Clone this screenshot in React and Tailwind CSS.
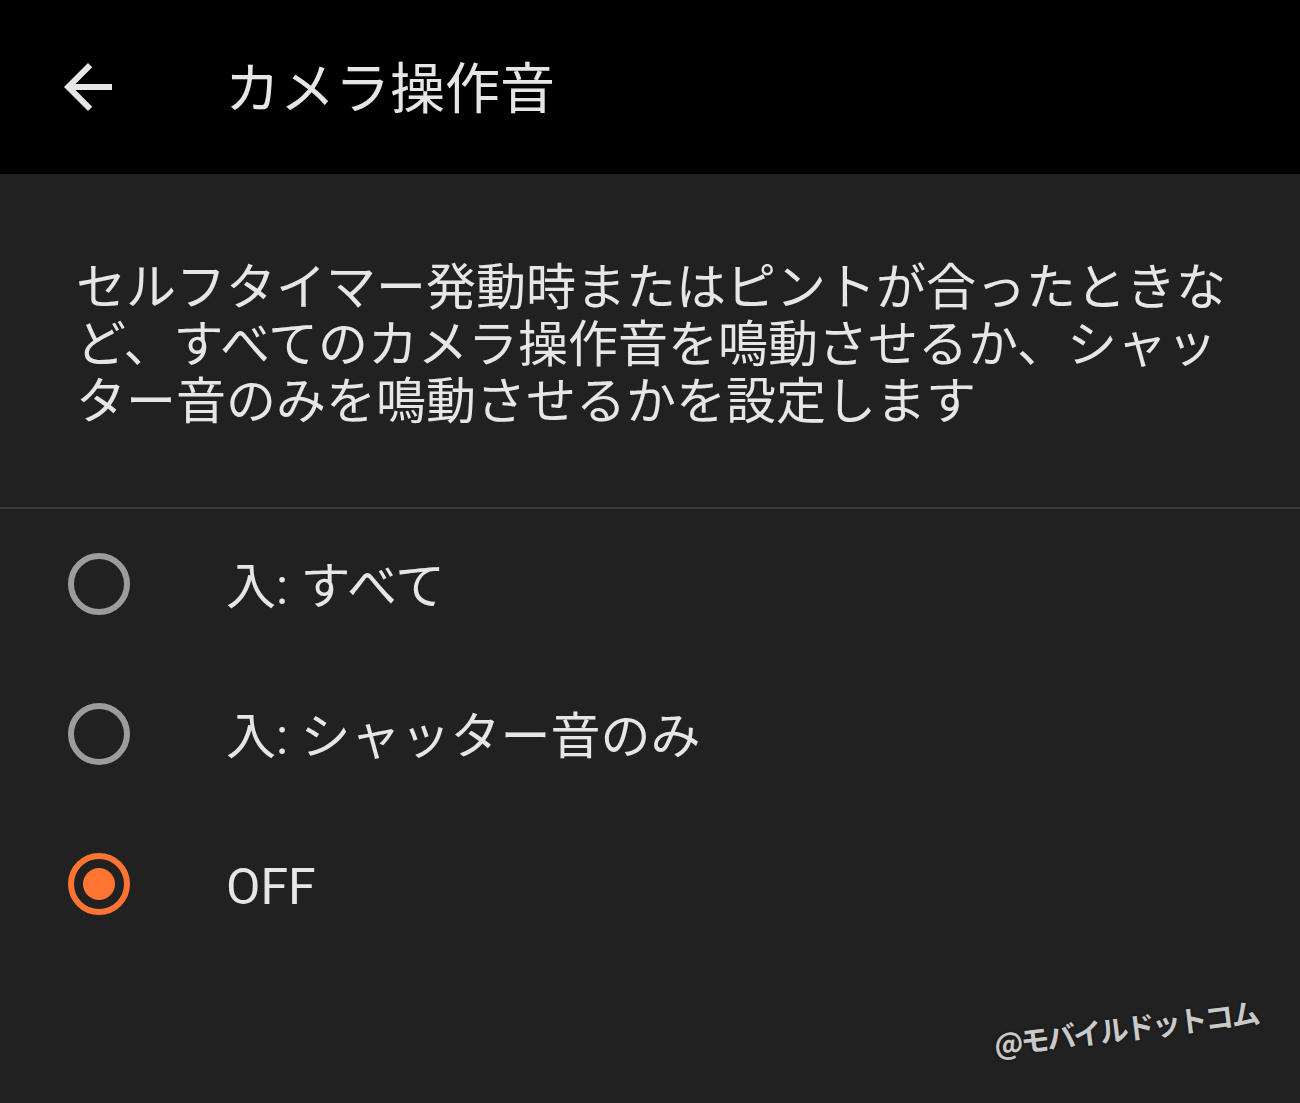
import { useState } from 'react'

const options = [
  { id: 'all', label: '入: すべて' },
  { id: 'shutter', label: '入: シャッター音のみ' },
  { id: 'off', label: 'OFF' },
]

const Radio = ({ checked }) => (
  <div
    className={`w-[62px] h-[62px] rounded-full border-[6px] flex items-center justify-center shrink-0 ${
      checked ? 'border-[#ff7433]' : 'border-[#9c9c9c]'
    }`}
  >
    {checked && <div className="w-[32px] h-[32px] rounded-full bg-[#ff7433]" />}
  </div>
)

const App = () => {
  const [selected, setSelected] = useState('off')

  return (
    <div className="relative w-[1300px] h-[1103px] overflow-hidden bg-[#212121] text-[#e6e6e6] font-['Roboto','Noto_Sans_CJK_JP',sans-serif]">
      <div className="h-[174px] bg-black flex items-center">
        <button className="ml-[52px] w-[72px] h-[72px] flex items-center justify-center">
          <svg viewBox="0 0 24 24" className="w-[72px] h-[72px]" fill="#e6e6e6">
            <path d="M20 11H7.83l5.59-5.59L12 4l-8 8 8 8 1.41-1.41L7.83 13H20v-2z" />
          </svg>
        </button>
        <h1 className="ml-[101px] mt-[4px] text-[55px] leading-none font-normal">カメラ操作音</h1>
      </div>

      <div className="w-[1240px] pl-[76px] pt-[86px] pb-[76px] text-[50px] leading-[57px]">
        セルフタイマー発動時またはピントが合ったときなど、すべてのカメラ操作音を鳴動させるか、シャッター音のみを鳴動させるかを設定します
      </div>

      <div className="h-[2px] bg-[#3a3a3a]" />

      <div>
        {options.map((opt) => (
          <div
            key={opt.id}
            className="h-[150px] flex items-center pl-[68px] cursor-pointer"
            onClick={() => setSelected(opt.id)}
          >
            <Radio checked={selected === opt.id} />
            <span className="ml-[96px] mt-[5px] text-[50px] leading-none">{opt.label}</span>
          </div>
        ))}
      </div>

      <div className="absolute left-[994px] top-[1022px] -rotate-[7deg] origin-left text-[29px] font-bold text-[#c9c9c9] tracking-[-2.5px] font-['Noto_Sans_CJK_JP',sans-serif] [text-shadow:0_0_3px_#111]">
        @モバイルドットコム
      </div>
    </div>
  )
}

export default App
